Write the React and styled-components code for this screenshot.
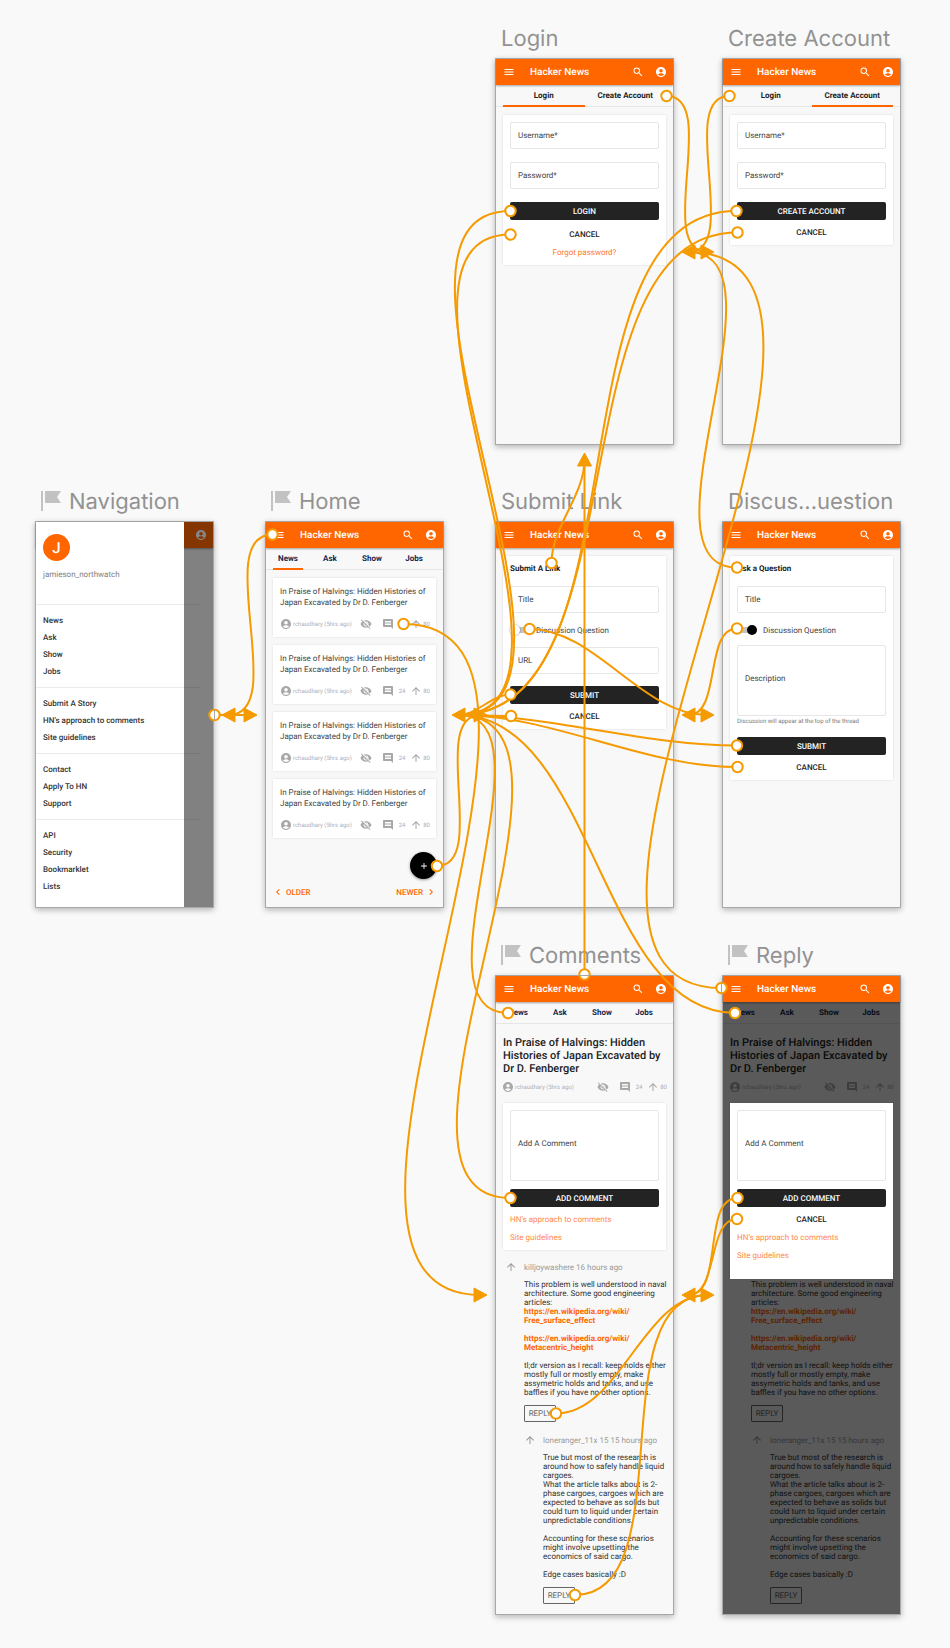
import React, { useId } from "react";
import styled, { createGlobalStyle } from "styled-components";
import {
  MdMenu,
  MdSearch,
  MdAccountCircle,
  MdVisibilityOff,
  MdComment,
  MdArrowUpward,
  MdAdd,
  MdChevronLeft,
  MdChevronRight,
} from "react-icons/md";

const ORANGE = "#ff6600";
const WIRE = "#f59a00";

const GlobalStyle = createGlobalStyle`
  * { box-sizing: border-box; }
  body {
    margin: 0;
    background: #f9f9f9;
    font-family: Roboto, "Liberation Sans", sans-serif;
    font-size: 8px;
    color: #222;
    text-rendering: geometricPrecision;
  }
  button, input, textarea { font: inherit; color: inherit; text-rendering: inherit; }
  svg { display: block; flex: none; }
  h1, h2, h3, p, ul { margin: 0; padding: 0; }
  ul { list-style: none; }
  a { text-decoration: none; }
`;

/* ---------- canvas ---------- */

const Canvas = styled.main`
  position: relative;
  min-width: 902px;
  padding: 23px 0 34px 35px;
`;

const BoardRow = styled.section`
  display: grid;
  grid-template-columns: 230px 230px 227px 179px;
  margin-bottom: ${(p) => p.$gap || 0}px;
`;

const BoardCell = styled.article`
  grid-column: ${(p) => p.$col};
  width: 179px;
`;

const BoardTitle = styled.h2`
  display: flex;
  align-items: center;
  gap: 8px;
  height: 35px;
  padding: 0 0 3px 6px;
  font: 400 22px/30px Inter, sans-serif;
  color: #929292;
  white-space: nowrap;

  svg { margin-bottom: 2px; }
`;

const Artboard = styled.div`
  position: relative;
  display: flex;
  flex-direction: column;
  min-height: ${(p) => (p.$tall ? 640 : 387)}px;
  border: 1px solid #a8a8a8;
  background: #f8f8f8;
  box-shadow: 0 2px 6px rgba(0, 0, 0, 0.28);
`;

const Wires = styled.svg`
  position: absolute;
  z-index: 5;
  left: 0;
  top: 0;
  width: 100%;
  height: 100%;
  pointer-events: none;
`;

/* ---------- app chrome ---------- */

const Bar = styled.header`
  position: relative;
  z-index: 1;
  display: flex;
  align-items: center;
  height: 26px;
  padding: 0 6px 0 7px;
  background: ${ORANGE};
  color: #fff;
  box-shadow: 0 1px 2px rgba(0, 0, 0, 0.35);
`;

const IconButton = styled.button`
  display: flex;
  padding: 0;
  border: 0;
  background: none;
  color: inherit;
`;

const Brand = styled.h1`
  flex: 1;
  margin-left: 15px;
  padding-top: 2px;
  font-size: 10px;
  line-height: 12px;
  font-weight: 500;
`;

const BarActions = styled.div`
  display: flex;
  gap: 11px;
  margin-left: auto;
`;

const TabBar = styled.nav`
  display: flex;
  gap: ${(p) => (p.$wide ? 0 : 12)}px;
  height: 22px;
  padding: 0 7px;
  box-shadow: inset 0 -1px #e6e6e6;
  color: ${(p) => (p.$wide ? "#222" : "#14254d")};
`;

const Tab = styled.button`
  flex: ${(p) => (p.$wide ? "1" : "0 0 30px")};
  height: 22px;
  padding: 0;
  border: 0;
  box-shadow: ${(p) => (p.$active ? `inset 0 -2px ${ORANGE}` : "none")};
  background: none;
  font-size: 8px;
  line-height: 22px;
  font-weight: 700;
`;

/* ---------- forms ---------- */

const Card = styled.div`
  margin: 8px 7px 0;
  padding: 7px 7px ${(p) => p.$bottom || 4}px;
  background: #fff;
  box-shadow: 0 0 2px rgba(0, 0, 0, 0.12);
`;

const Stack = styled.div`
  display: flex;
  flex-direction: column;
  gap: ${(p) => p.$gap}px;
`;

const FormTitle = styled.h3`
  font-size: 8px;
  line-height: 11px;
  font-weight: 700;
`;

const FieldBox = styled.div`
  display: flex;
  align-items: center;
  height: ${(p) => (p.$area ? 71 : 27)}px;
  padding: 0 7px ${(p) => (p.$area ? 4 : 0)}px;
  border: 1px solid #e6e6e6;
  border-radius: 2px;
  color: #444;

  label { white-space: nowrap; }

  input, textarea {
    flex: 1;
    min-width: 0;
    height: 100%;
    padding: 0 4px;
    border: 0;
    outline: 0;
    background: none;
    resize: none;
  }
`;

const SolidButton = styled.button`
  display: block;
  width: 100%;
  height: 18px;
  padding: 2px 0 0;
  border: 0;
  border-radius: 2px;
  background: #232323;
  color: #fff;
  font-size: 8px;
  line-height: 16px;
  font-weight: 500;
`;

const PlainButton = styled(SolidButton)`
  margin-top: ${(p) => p.$top || 3}px;
  background: none;
  color: #222;
`;

const CardLink = styled.a`
  display: block;
  padding-top: 2px;
  line-height: 16px;
  text-align: ${(p) => (p.$center ? "center" : "left")};
  color: ${(p) => (p.$center ? "#ff7a26" : "#ff8a48")};
`;

const LinkGroup = styled.div`
  padding-top: ${(p) => (p.$spaced ? 3 : 0)}px;
`;

const Hint = styled.p`
  margin-bottom: 9px;
  font-size: 6px;
  line-height: 12px;
  color: #777;
`;

const SwitchRow = styled.div`
  display: flex;
  align-items: center;
  gap: 6px;
  height: 10px;
  color: #444;
`;

const Switch = styled.input`
  appearance: none;
  display: flex;
  align-items: center;
  width: 20px;
  height: 10px;
  margin: 0;
  background: linear-gradient(#c4c4c4, #c4c4c4) center / 14px 6px no-repeat;

  &::before {
    content: "";
    width: 10px;
    height: 10px;
    border-radius: 50%;
    background: #fff;
    box-shadow: 0 0 1px 1px rgba(0, 0, 0, 0.15);
  }

  &:checked::before {
    margin-left: auto;
    background: #000;
    box-shadow: none;
  }
`;

/* ---------- stories ---------- */

const StoryList = styled.div`
  display: flex;
  flex-direction: column;
  gap: 8px;
  margin: 8px 7px 0;
`;

const StoryCard = styled.article`
  height: 59px;
  padding: 8px 5px 0 7px;
  background: #fff;
  box-shadow: 0 0 2px rgba(0, 0, 0, 0.12);

  h3 {
    margin-bottom: 10px;
    font-size: 8px;
    line-height: 11px;
    font-weight: 400;
    color: #444;
    white-space: nowrap;
  }
`;

const Meta = styled.div`
  display: flex;
  align-items: center;
  height: 12px;
  font-size: 6px;
  color: #a9b0be;
  white-space: nowrap;

  svg { color: #a8a8a8; }
`;

const MetaAuthor = styled.span`
  flex: 1;
  margin-left: 1px;
`;

const MetaCount = styled.span`
  width: ${(p) => p.$w}px;
  text-align: center;
`;

const MetaGap = styled.span`
  width: 10px;
`;

const FabLine = styled.div`
  display: flex;
  justify-content: flex-end;
  margin: 14px 6px 0 0;
`;

const Fab = styled.button`
  display: flex;
  align-items: center;
  justify-content: center;
  width: 27px;
  height: 27px;
  padding: 0;
  border: 0;
  border-radius: 50%;
  background: #000;
  color: #fff;
  box-shadow: 0 1px 3px rgba(0, 0, 0, 0.4);
`;

const Pager = styled.nav`
  display: flex;
  justify-content: space-between;
  margin-top: 6px;
  padding: 0 6px;
`;

const PageLink = styled.a`
  display: flex;
  align-items: center;
  gap: 2px;
  height: 14px;
  font-weight: 500;
  color: ${ORANGE};
`;

/* ---------- drawer ---------- */

const Shade = styled.div`
  position: absolute;
  inset: 0;
  z-index: 2;
  background: rgba(0, 0, 0, ${(p) => p.$level});
`;

const Drawer = styled.aside`
  position: absolute;
  z-index: 3;
  inset: 0 auto 0 0;
  width: 148px;
  padding-top: 12px;
  background: #fff;
`;

const Avatar = styled.div`
  width: 27px;
  height: 27px;
  margin-left: 7px;
  border-radius: 50%;
  background: ${ORANGE};
  color: #fff;
  font-size: 15px;
  line-height: 29px;
  font-weight: 500;
  text-align: center;
`;

const UserName = styled.p`
  height: 43px;
  padding: 8px 7px 0;
  line-height: 12px;
  color: #808080;
`;

const MenuGroup = styled.ul`
  width: 164px;
  padding: 7px;
  border-top: 1px solid rgba(0, 0, 0, 0.08);

  a {
    display: block;
    line-height: 17px;
    font-weight: 500;
    color: #333;
  }
`;

/* ---------- comments ---------- */

const Page = styled.div`
  position: relative;
  flex: 1;
`;

const Headline = styled.h2`
  padding: 12px 0 6px 7px;
  font-size: 11px;
  line-height: 13px;
  font-weight: 500;
  white-space: nowrap;
`;

const PageMeta = styled(Meta)`
  margin: 0 5px 10px 6px;
`;

const CommentCard = styled(Card)`
  position: relative;
  z-index: ${(p) => (p.$raised ? 3 : "auto")};
  margin-top: 0;
`;

const Comment = styled.article`
  padding-left: ${(p) => (p.$nested ? 28 : 9)}px;
  padding-top: ${(p) => (p.$nested ? 12 : p.$headless ? 1 : 11)}px;
`;

const CommentAuthor = styled.div`
  display: flex;
  gap: 7px;
  height: 19px;
  line-height: 13px;
  color: #9a9a9a;
  white-space: nowrap;
`;

const CommentText = styled.p`
  margin: 0 0 8px 19px;
  line-height: 9px;
  color: #333;
  white-space: pre;

  a {
    font-weight: 700;
    color: ${ORANGE};
  }
`;

const ReplyButton = styled.button`
  display: block;
  width: 32px;
  height: 17px;
  margin-left: 19px;
  padding: 0;
  border: 1px solid #666;
  border-radius: 1px;
  background: none;
  color: #666;
  line-height: 15px;
`;

/* ---------- components ---------- */

const FlagIcon = () => (
  <svg width="20" height="20" viewBox="0 0 20 20" fill="#c2c2c2" aria-hidden="true">
    <rect width="2" height="20" />
    <path d="M4 0H20L16 6L20 12H4Z" />
  </svg>
);

const Board = ({ title, col, flag, tall, children }) => (
  <BoardCell $col={col}>
    <BoardTitle>
      {flag && <FlagIcon />}
      {title}
    </BoardTitle>
    <Artboard $tall={tall}>{children}</Artboard>
  </BoardCell>
);

const AppBar = () => (
  <Bar>
    <IconButton aria-label="Menu"><MdMenu size={12} /></IconButton>
    <Brand>Hacker News</Brand>
    <BarActions>
      <IconButton aria-label="Search"><MdSearch size={12} /></IconButton>
      <IconButton aria-label="Account"><MdAccountCircle size={12} /></IconButton>
    </BarActions>
  </Bar>
);

const Tabs = ({ items, active, wide }) => (
  <TabBar $wide={wide}>
    {items.map((item) => (
      <Tab key={item} $wide={wide} $active={item === active}>{item}</Tab>
    ))}
  </TabBar>
);

const Field = ({ label, area, type = "text" }) => {
  const id = useId();
  return (
    <FieldBox $area={area}>
      <label htmlFor={id}>{label}</label>
      {area ? <textarea id={id} /> : <input id={id} type={type} />}
    </FieldBox>
  );
};

const DiscussionSwitch = ({ on }) => {
  const id = useId();
  return (
    <SwitchRow>
      <Switch id={id} type="checkbox" defaultChecked={on} />
      <label htmlFor={id}>Discussion Question</label>
    </SwitchRow>
  );
};

const AccountForm = ({ active, action, forgot }) => (
  <>
    <AppBar />
    <Tabs wide items={["Login", "Create Account"]} active={active} />
    <Card>
      <Stack $gap={13}>
        <Field label="Username*" />
        <Field label="Password*" type="password" />
        <SolidButton>{action}</SolidButton>
      </Stack>
      <PlainButton $top={forgot ? 5 : 3}>CANCEL</PlainButton>
      {forgot && <CardLink $center href="#forgot">Forgot password?</CardLink>}
    </Card>
  </>
);

const StoryMeta = ({ as: Wrapper = Meta }) => (
  <Wrapper>
    <MdAccountCircle size={12} />
    <MetaAuthor>rchaudhary (5hrs ago)</MetaAuthor>
    <MdVisibilityOff size={12} />
    <MetaGap />
    <MdComment size={12} />
    <MetaCount $w={16}>24</MetaCount>
    <MdArrowUpward size={12} />
    <MetaCount $w={9}>80</MetaCount>
  </Wrapper>
);

const SECTIONS = ["News", "Ask", "Show", "Jobs"];

const MENU = [
  SECTIONS,
  ["Submit A Story", "HN’s approach to comments", "Site guidelines"],
  ["Contact", "Apply To HN", "Support"],
  ["API", "Security", "Bookmarklet", "Lists"],
];

const NavigationScreen = () => (
  <>
    <Bar>
      <BarActions>
        <IconButton aria-label="Account"><MdAccountCircle size={12} /></IconButton>
      </BarActions>
    </Bar>
    <Shade $level={0.48} />
    <Drawer>
      <Avatar>J</Avatar>
      <UserName>jamieson_northwatch</UserName>
      {MENU.map((group) => (
        <MenuGroup key={group[0]}>
          {group.map((item) => (
            <li key={item}><a href="#menu">{item}</a></li>
          ))}
        </MenuGroup>
      ))}
    </Drawer>
  </>
);

const HomeScreen = () => (
  <>
    <AppBar />
    <Tabs items={SECTIONS} active="News" />
    <StoryList>
      {[1, 2, 3, 4].map((n) => (
        <StoryCard key={n}>
          <h3>
            In Praise of Halvings: Hidden Histories of
            <br />
            Japan Excavated by Dr D. Fenberger
          </h3>
          <StoryMeta />
        </StoryCard>
      ))}
    </StoryList>
    <FabLine>
      <Fab aria-label="Submit"><MdAdd size={10} /></Fab>
    </FabLine>
    <Pager>
      <PageLink href="#older"><MdChevronLeft size={12} />OLDER</PageLink>
      <PageLink href="#newer">NEWER<MdChevronRight size={12} /></PageLink>
    </Pager>
  </>
);

const SubmitScreen = () => (
  <>
    <AppBar />
    <Card>
      <Stack $gap={12}>
        <FormTitle>Submit A Link</FormTitle>
        <Field label="Title" />
        <DiscussionSwitch />
        <Field label="URL" />
        <SolidButton>SUBMIT</SolidButton>
      </Stack>
      <PlainButton>CANCEL</PlainButton>
    </Card>
  </>
);

const QuestionScreen = () => (
  <>
    <AppBar />
    <Card>
      <Stack $gap={12}>
        <FormTitle>Ask a Question</FormTitle>
        <Field label="Title" />
        <Stack $gap={10}>
          <DiscussionSwitch on />
          <div>
            <Field area label="Description" />
            <Hint>Discussion will appear at the top of the thread</Hint>
            <SolidButton>SUBMIT</SolidButton>
          </div>
        </Stack>
      </Stack>
      <PlainButton>CANCEL</PlainButton>
    </Card>
  </>
);

const CommentForm = ({ modal }) => (
  <CommentCard $raised={modal} $bottom={modal ? 15 : 4}>
    <Stack $gap={8}>
      <Field area label="Add A Comment" />
      <SolidButton>ADD COMMENT</SolidButton>
    </Stack>
    {modal && <PlainButton>CANCEL</PlainButton>}
    <LinkGroup $spaced={!modal}>
      <CardLink href="#approach">HN’s approach to comments</CardLink>
      <CardLink href="#guidelines">Site guidelines</CardLink>
    </LinkGroup>
  </CommentCard>
);

const CommentsScreen = ({ modal }) => (
  <>
    <AppBar />
    <Page>
      {modal && <Shade $level={0.64} />}
      <Tabs items={SECTIONS} />
      <Headline>
        In Praise of Halvings: Hidden
        <br />
        Histories of Japan Excavated by
        <br />
        Dr D. Fenberger
      </Headline>
      <StoryMeta as={PageMeta} />
      <CommentForm modal={modal} />
      <Comment $headless={modal}>
        {!modal && (
          <CommentAuthor><MdArrowUpward size={12} />killjoywashere 16 hours ago</CommentAuthor>
        )}
        <CommentText>
          {"This problem is well understood in naval\narchitecture. Some good engineering\narticles:\n"}
          <a href="#surface">{"https://en.wikipedia.org/wiki/\nFree_surface_effect"}</a>
          {"\n\n"}
          <a href="#height">{"https://en.wikipedia.org/wiki/\nMetacentric_height"}</a>
          {"\n\ntl;dr version as I recall: keep holds either\nmostly full or mostly empty, make\nassymetric holds and tanks, and use\nbaffles if you have no other options."}
        </CommentText>
        <ReplyButton>REPLY</ReplyButton>
      </Comment>
      <Comment $nested>
        <CommentAuthor><MdArrowUpward size={12} />loneranger_11x 15 15 hours ago</CommentAuthor>
        <CommentText>
          {"True but most of the research is\naround how to safely handle liquid\ncargoes.\nWhat the article talks about is 2-\nphase cargoes, cargoes which are\nexpected to behave as solids but\ncould turn to liquid under certain\nunpredictable conditions.\n\nAccounting for these scenarios\nmight involve upsetting the\neconomics of said cargo.\n\nEdge cases basically :D"}
        </CommentText>
        <ReplyButton>REPLY</ReplyButton>
      </Comment>
    </Page>
  </>
);

/* ---------- prototype links ---------- */

/* Every port an arrow can land on; "dir" is the way the arrow head points. */
const PORTS = {
  navRight: { x: 222, y: 715, dir: "left" },
  homeLeft: { x: 257, y: 715, dir: "right" },
  homeRight: { x: 452, y: 715, dir: "left" },
  submitLeft: { x: 487, y: 715, dir: "right" },
  submitRight: { x: 682, y: 715, dir: "left" },
  questionLeft: { x: 714, y: 715, dir: "right" },
  loginRight: { x: 682, y: 252, dir: "left" },
  createLeft: { x: 714, y: 252, dir: "right" },
  loginBottom: { x: 584.5, y: 453, dir: "up" },
  commentsLeft: { x: 487, y: 1295, dir: "right" },
  commentsRight: { x: 682, y: 1295, dir: "left" },
  replyLeft: { x: 714, y: 1295, dir: "right" },
};

/* [x, y, port, board edge that crosses the hotspot] */
const LINKS = [
  [214.5, 715, "homeLeft", "v"],
  [272.5, 534.5, "navRight"],
  [403.5, 624, "commentsLeft"],
  [437, 866, "submitLeft"],
  [666.5, 96, "createLeft"],
  [729.5, 96, "loginRight"],
  [510.5, 211, "homeRight"],
  [510.5, 234.5, "homeRight"],
  [736.5, 211, "homeRight"],
  [737.5, 232.5, "homeRight"],
  [551.5, 563, "loginBottom"],
  [529.5, 629, "questionLeft"],
  [510.5, 694.5, "homeRight"],
  [511, 716, "homeRight"],
  [737, 567.5, "loginRight"],
  [737, 628.5, "submitRight"],
  [737, 745.5, "homeRight"],
  [737.5, 767, "homeRight"],
  [584.5, 974.5, "loginBottom", "h"],
  [508, 1013, "homeRight"],
  [510.5, 1198, "homeRight"],
  [721.5, 988, "loginRight", "v"],
  [735, 1013, "homeRight"],
  [737.5, 1198, "commentsRight"],
  [737, 1219, "commentsRight"],
  [556, 1413.5, "replyLeft"],
  [575, 1595, "replyLeft"],
];

const UNIT = { left: [-1, 0], right: [1, 0], up: [0, -1] };
const HEAD = 13;

function wirePath([x, y, name]) {
  const port = PORTS[name];
  const [ux, uy] = UNIT[port.dir];
  const ex = port.x - ux * (HEAD / 2);
  const ey = port.y - uy * (HEAD / 2);
  const pull = Math.hypot(ex - x, ey - y) / 3;
  return `M${x} ${y}C${x + ux * pull} ${y + uy * pull} ${ex - ux * pull} ${ey - uy * pull} ${ex} ${ey}`;
}

function headPath({ x, y, dir }) {
  const [ux, uy] = UNIT[dir];
  const bx = x - ux * HEAD;
  const by = y - uy * HEAD;
  return `M${x} ${y}L${bx + uy * 7} ${by + ux * 7}L${bx - uy * 7} ${by - ux * 7}Z`;
}

const PrototypeWires = () => (
  <Wires aria-hidden="true">
    <g fill="none" stroke={WIRE} strokeWidth="2">
      {LINKS.map((link, i) => <path key={i} d={wirePath(link)} />)}
    </g>
    <g fill={WIRE} stroke={WIRE} strokeLinejoin="round">
      {Object.entries(PORTS).map(([name, port]) => <path key={name} d={headPath(port)} />)}
    </g>
    {LINKS.map(([x, y, , edge], i) => (
      <g key={i}>
        <circle cx={x} cy={y} r="5.2" fill="#fff" stroke={WIRE} strokeWidth="2" />
        {edge === "v" && <path d={`M${Math.floor(x) + 0.5} ${y - 5}v10`} stroke="#a8a8a8" />}
        {edge === "h" && <path d={`M${x - 5} ${Math.floor(y) + 1.5}h10`} stroke="#a8a8a8" />}
      </g>
    ))}
  </Wires>
);

export default function App() {
  return (
    <>
      <GlobalStyle />
      <Canvas>
        <BoardRow $gap={41}>
          <Board title="Login" col={3}>
            <AccountForm active="Login" action="LOGIN" forgot />
          </Board>
          <Board title="Create Account" col={4}>
            <AccountForm active="Create Account" action="CREATE ACCOUNT" />
          </Board>
        </BoardRow>
        <BoardRow $gap={32}>
          <Board title="Navigation" col={1} flag><NavigationScreen /></Board>
          <Board title="Home" col={2} flag><HomeScreen /></Board>
          <Board title="Submit Link" col={3}><SubmitScreen /></Board>
          <Board title="Discus...uestion" col={4}><QuestionScreen /></Board>
        </BoardRow>
        <BoardRow>
          <Board title="Comments" col={3} flag tall><CommentsScreen /></Board>
          <Board title="Reply" col={4} flag tall><CommentsScreen modal /></Board>
        </BoardRow>
        <PrototypeWires />
      </Canvas>
    </>
  );
}
